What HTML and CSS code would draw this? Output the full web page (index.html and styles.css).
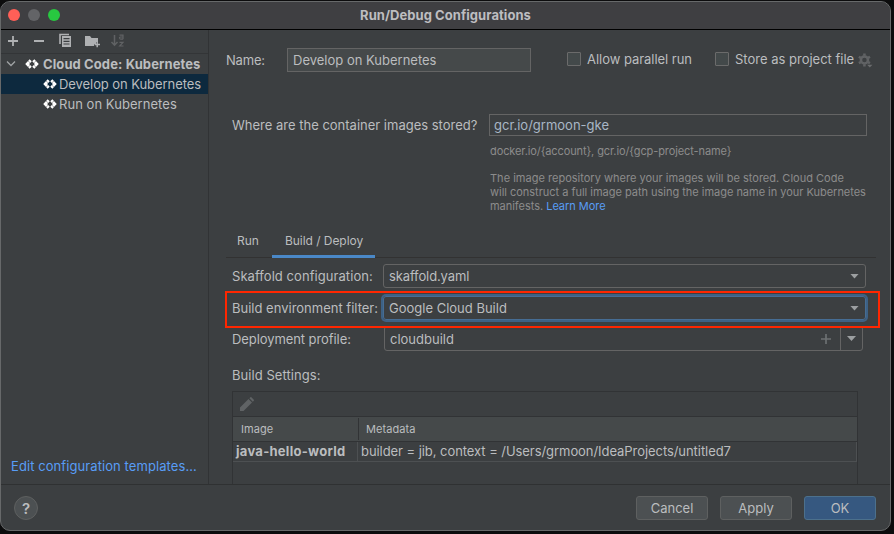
FILE: index.html
```html
<!DOCTYPE html>
<html lang="en">
<head>
<meta charset="utf-8">
<title>Run/Debug Configurations</title>
<link rel="stylesheet" href="styles.css">
</head>
<body>
<svg class="defs" width="0" height="0" aria-hidden="true">
  <symbol id="cloud-code" viewBox="0 0 14 12">
    <path d="M5.700 2.200L2.200 6l3.500 3.800M8.300 2.200l3.500 3.800-3.500 3.800" fill="none" stroke="#fff" stroke-width="2.900"/>
    <path d="M2.500 2.500l2.500 2.200M2.500 9.500l2.500-2.200M11.500 2.500L9 4.700M11.500 9.500L9 7.300" stroke="#3c3f41" stroke-opacity=".7" stroke-width=".6"/>
  </symbol>
</svg>
<div class="window">
  <header class="titlebar">
    <div class="lights"><i class="red"></i><i class="grey"></i><i class="green"></i></div>
    <h1>Run/Debug Configurations</h1>
  </header>
  <div class="main">
    <aside class="sidebar">
      <div class="toolbar">
        <svg width="125" height="22" viewBox="0 0 125 22">
          <path d="M7 11h10M12 6v10M33 11h10" stroke="#afb1b3" stroke-width="1.800" fill="none"/>
          <path d="M59 14V4.500h9" stroke="#afb1b3" stroke-width="1.600" fill="none"/>
          <path fill="#afb1b3" fill-rule="evenodd" d="M61 6h9v11H61zM62.500 8v1.200h6V8zM62.500 10.700v1.200h6v-1.200zM62.500 13.400v1.200h6v-1.200z"/>
          <path fill="#afb1b3" d="M84 6h5l1.500 2H97v4h-2v2h-2v2h-9z"/>
          <path d="M93.500 14.500h5.500M96.200 11.800v5.500" stroke="#afb1b3" stroke-width="1.500"/>
          <path d="M113.500 5v9.500M110.500 12l3 3.200 3-3.200" stroke="#606264" stroke-width="1.500" fill="none"/>
          <path d="M118.500 5.200h3.500v4M122 7h-2.500q-1.200.2-1 1.200.3 1 1.300 1H122M118.500 12.300h3.500L118.700 16H122.500" stroke="#606264" stroke-width="1.200" fill="none"/>
        </svg>
      </div>
      <div class="tree">
        <div class="node root">
          <svg class="chev" width="10" height="8" viewBox="0 0 10 8"><path d="M1 1.500l4 4 4-4" fill="none" stroke="#a0a3a5" stroke-width="1.300"/></svg>
          <svg width="14" height="12"><use href="#cloud-code"/></svg><b class="t1">Cloud Code: Kubernetes</b>
        </div>
        <div class="node leaf selected"><svg width="14" height="12"><use href="#cloud-code"/></svg><span class="t2">Develop on Kubernetes</span></div>
        <div class="node leaf"><svg width="14" height="12"><use href="#cloud-code"/></svg><span class="t8">Run on Kubernetes</span></div>
      </div>
      <a class="templates">Edit configuration templates...</a>
    </aside>
    <section class="panel">
      <div class="name-row">
        <label class="name-label">Name:</label>
        <div class="name-field">Develop on Kubernetes</div>
        <div class="check"><i></i><span class="t3">Allow parallel run</span></div>
        <div class="check store"><i></i><span class="t4">Store as project file</span>
          <svg width="15" height="15" viewBox="0 0 14 14"><circle cx="6" cy="6.500" r="3.300" fill="none" stroke="#606264" stroke-width="2.400"/><path d="M6 .5v2M6 10.500v2M.8 3.500l1.800 1M9.400 8.500l1.800 1M.8 9.500l1.800-1M9.400 4.500l1.800-1" stroke="#606264" stroke-width="2.400"/><path d="M8.500 11h5L11 13.500z" fill="#6a6c6e"/></svg>
        </div>
      </div>
      <div class="image-row">
        <label class="where">Where are the container images stored?</label>
        <div class="image-col">
          <div class="repo-field">gcr.io/grmoon-gke</div>
          <div class="hint h0">docker.io/{account}, gcr.io/{gcp-project-name}</div>
          <div class="hint para"><div class="h1">The image repository where your images will be stored. Cloud Code</div><div class="h2">will construct a full image path using the image name in your Kubernetes</div><div class="h3">manifests. <a>Learn More</a></div></div>
        </div>
      </div>
      <nav class="tabs"><span>Run</span><span class="active">Build / Deploy</span></nav>
      <div class="form">
        <div class="field-row r1"><label>Skaffold configuration:</label><div class="select"><span class="t5">skaffold.yaml</span><i class="arrow"></i></div></div>
        <div class="field-row highlight"><label>Build environment filter:</label><div class="select focused"><span class="t6">Google Cloud Build</span><i class="arrow"></i></div></div>
        <div class="field-row r3"><label>Deployment profile:</label><div class="combo"><span class="t7">cloudbuild</span><svg width="10" height="10" viewBox="0 0 10 10"><path d="M0 5h10M5 0v10" stroke="#6c7072" stroke-width="1.700"/></svg><div class="drop"><i class="arrow"></i></div></div></div>
      </div>
      <div class="settings-title">Build Settings:</div>
      <div class="table">
        <div class="table-tools"><svg width="14" height="14" viewBox="0 0 14 14"><path fill="#606365" d="M0 10.500L8.500 2 12 5.500 3.500 14H0zM9.400 1.200l1-1q.5-.4 1 0L13.800 2.700q.4.500 0 1l-1 1z"/></svg></div>
        <div class="thead"><div>Image</div><div>Metadata</div></div>
        <div class="trow"><b>java-hello-world</b><div>builder = jib, context = /Users/grmoon/IdeaProjects/untitled7</div></div>
      </div>
    </section>
  </div>
  <footer class="footer">
    <div class="help">?</div>
    <div class="btn">Cancel</div><div class="btn">Apply</div><div class="btn ok">OK</div>
  </footer>
</div>
</body>
</html>
```
FILE: styles.css
```css
* { box-sizing: border-box; }
body { margin: 0; width: 894px; height: 534px; overflow: hidden; padding-top: 1px; background: #0c0c0d; font: 13px/20px Inter, "Liberation Sans", sans-serif; color: #bbbdbf; white-space: nowrap; }
.defs { position: absolute; }
svg { flex: none; display: block; }
i { display: block; flex: none; }
.window { width: 891px; height: 530px; border: 1px solid #67696a; border-radius: 10px; background: #3c3f41; overflow: hidden; display: flex; flex-direction: column; }
.titlebar { height: 28px; flex: none; border-bottom: 1px solid #000; background: #3f3f42; display: flex; align-items: center; }
.lights { display: flex; gap: 8px; padding-left: 7px; width: 200px; margin-right: -200px; position: relative; top: -1px; }
.lights i { width: 12px; height: 12px; border-radius: 50%; }
.red { background: #ff5f57; } .grey { background: #636467; } .green { background: #28c840; }
h1 { flex: 1; margin: 0; font-size: 13px; font-weight: 700; text-align: center; line-height: 24px; padding-bottom: 2px; color: #bdbdc0; letter-spacing: .05px; }
.main { height: 455px; flex: none; display: flex; border-bottom: 1px solid #2f3132; }
.sidebar { width: 208px; flex: none; border-right: 1px solid #313335; display: flex; flex-direction: column; }
.toolbar { height: 24px; flex: none; border-bottom: 1px solid #333537; }
.node { height: 20px; display: flex; align-items: center; }
.root { padding-left: 5px; gap: 4px; }
.root .chev { margin-right: 5px; }
.leaf { padding-left: 42px; gap: 2px; }
.t1 { letter-spacing: .1px; }
.t2 { letter-spacing: -.07px; }
.t3 { letter-spacing: -.04px; }
.t5 { letter-spacing: -.12px; }
.t8 { letter-spacing: .05px; }
.selected { background: #0d293e; }
.templates { margin: auto 0 8px 10px; color: #589df6; letter-spacing: .08px; }
.panel { flex: 1; min-width: 0; padding: 18px 0 0 17px; overflow: hidden; }
.name-row { display: flex; height: 24px; align-items: center; }
.name-label { width: 61px; letter-spacing: -.2px; }
.name-field { width: 244px; height: 24px; border: 1px solid #646464; background: #45494a; padding-left: 5px; line-height: 23px; margin-right: 36px; }
.check { display: flex; gap: 6px; align-items: center; width: 148px; height: 22px; margin-top: -2px; }
.check i { width: 14px; height: 14px; border: 1px solid #6b6b6b; border-radius: 1px; background: #43494a; }
.check svg { margin: 2px 0 0 -2px; }
.image-row { display: flex; margin-top: 42px; height: 109px; padding-left: 6px; }
.where { width: 257px; line-height: 23px; }
.repo-field { width: 378px; height: 22px; border: 1px solid #646464; padding-left: 4px; line-height: 21px; color: #a9b7c6; }
.hint { font-size: 11px; line-height: 14px; color: #8c8c8c; padding-left: 1px; }
.h0 { margin-top: 8px; letter-spacing: -.1px; }
.h1 { letter-spacing: .015px; }
.h2 { letter-spacing: -.02px; }
.h3 { letter-spacing: -.03px; }
.para { margin-top: 13px; }
.hint a { color: #589df6; }
.tabs { width: 650px; height: 35px; border-bottom: 1px solid #323232; display: flex; font-size: 12px; line-height: 36px; }
.tabs span { padding: 0 11px; height: 35px; }
.tabs .active { width: 103px; padding: 0 13px; border-bottom: 3px solid #4a88c7; margin-left: 2px; letter-spacing: -.04px; }
.form { padding-top: 6px; }
.field-row { display: flex; align-items: center; padding-left: 6px; }
.field-row label { width: 151px; }
.r1 label { letter-spacing: .06px; }
.select { width: 483px; height: 24px; border: 1px solid #646464; border-radius: 3px; padding: 0 6px 0 5px; display: flex; align-items: center; justify-content: space-between; }
.arrow { width: 9px; height: 5px; background: #9c9fa1; clip-path: polygon(0 0, 100% 0, 50% 100%); }
.highlight { margin: 3px 0 0 -1px; width: 655px; height: 37px; border: 2px solid #ff2600; padding-left: 5px; padding-bottom: 3px; position: relative; }
.focused { border-color: #466d94; box-shadow: 0 0 0 2px #3d6185; }
.r3 { margin-top: -2px; }
.r3 label { width: 152px; letter-spacing: -.08px; }
.combo { width: 479px; height: 25px; border: 1px solid #646464; border-radius: 3px; display: flex; align-items: center; padding-left: 5px; }
.combo svg { margin: 0 9px 0 auto; }
.drop { width: 22px; height: 23px; border-left: 1px solid #646464; display: flex; align-items: center; justify-content: center; }
.settings-title { margin: 14px 0 0 6px; line-height: 20px; letter-spacing: .06px; }
.table { margin: 6px 0 0 6px; width: 626px; height: 100px; border: 1px solid #313335; }
.table-tools { height: 25px; border-bottom: 1px solid #313335; padding: 5px 0 0 7px; }
.thead { height: 25px; background: #45494a; border-bottom: 1px solid #313335; display: flex; font-size: 11px; padding: 1px 0; }
.thead div { padding-left: 7px; line-height: 23px; letter-spacing: .08px; }
.thead div:first-child { width: 126px; padding-left: 8px; border-right: 1px solid #313335; }
.trow { height: 20px; display: flex; border: solid #4d5052; border-width: 0 1px 1px 0; line-height: 19px; }
.trow b { width: 125px; padding-left: 3px; border-right: 1px solid #4d5052; letter-spacing: .27px; }
.trow div { padding-left: 3px; letter-spacing: -.06px; }
.footer { flex: 1; display: flex; gap: 12px; padding: 11px 14px 0 13px; }
.help { width: 24px; height: 24px; border-radius: 50%; border: 1px solid #5e6060; background: #4c5052; font-size: 15px; font-weight: 600; line-height: 23px; text-align: center; margin-right: auto; }
.btn { width: 72px; height: 24px; border: 1px solid #5e6060; border-radius: 3px; background: #4c5052; text-align: center; line-height: 23px; }
.ok { background: #365880; border-color: #4c708c; }
b { font-weight: 700; }
```
